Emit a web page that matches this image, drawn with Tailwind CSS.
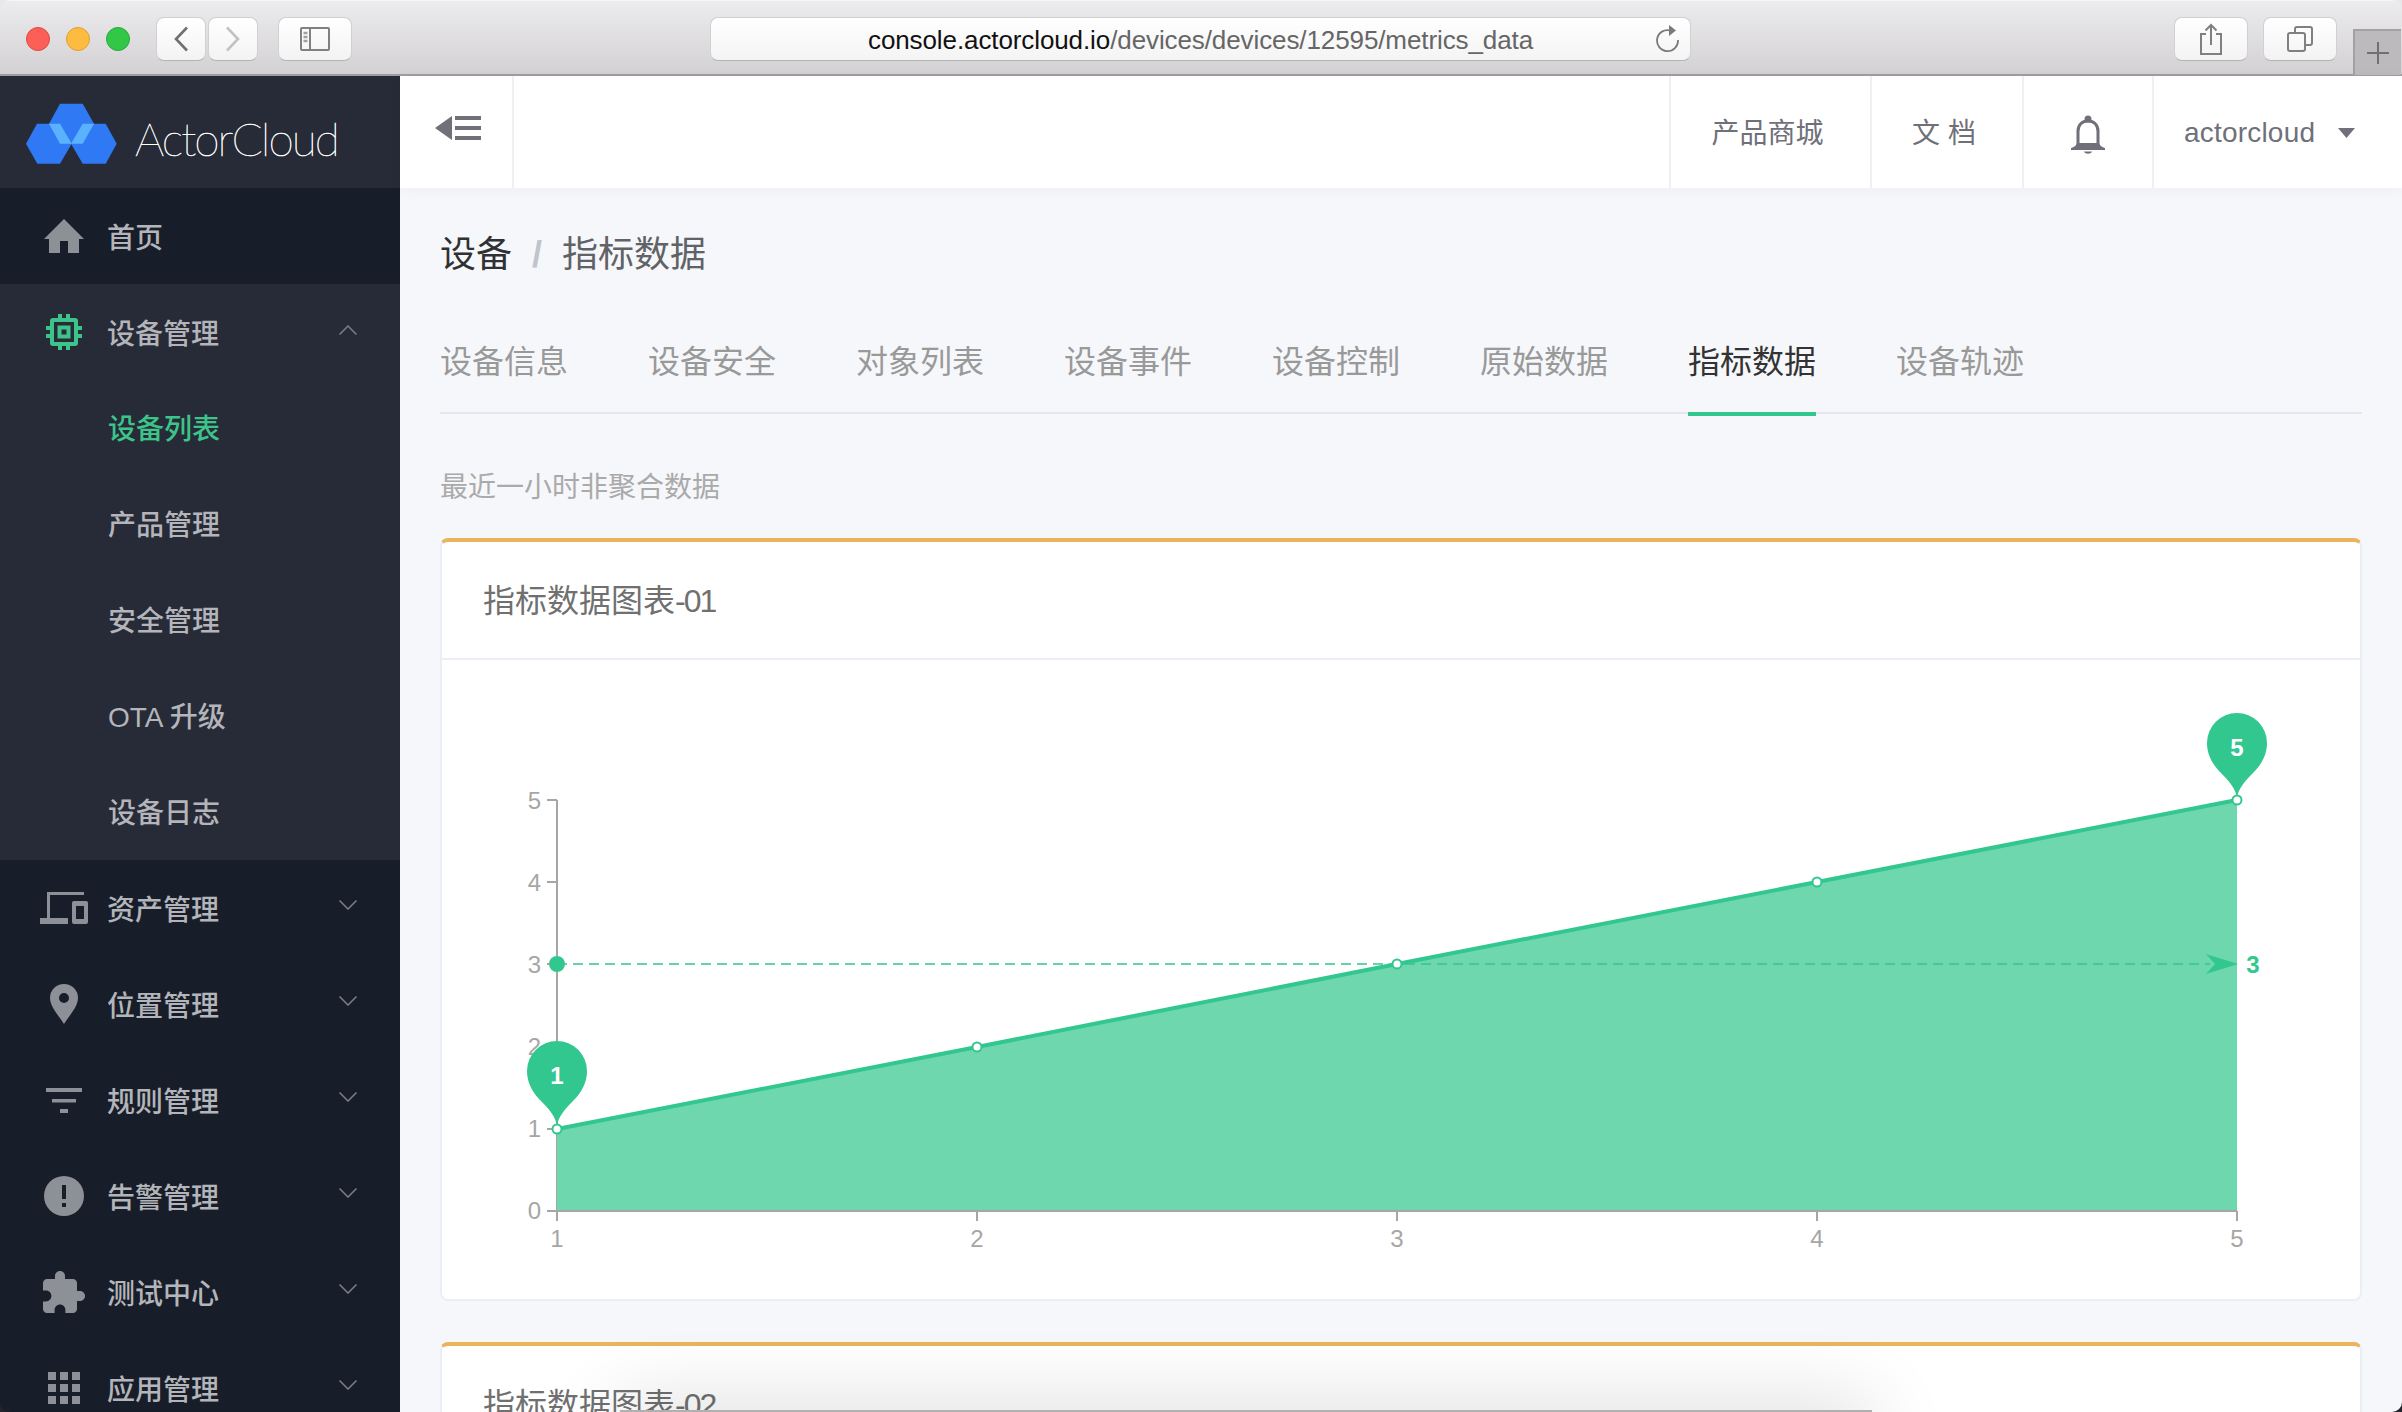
<!DOCTYPE html>
<html lang="zh-CN">
<head>
  <meta charset="UTF-8">
  <title>ActorCloud | 指标数据</title>
  <script src="https://cdn.jsdelivr.net/npm/@tailwindcss/browser@4"></script>
</head>
<body class="w-[2402px] h-[1412px] overflow-hidden bg-[linear-gradient(#e8e8ea_50%,#23232c_50%)] font-['Liberation_Sans','Noto_Sans_CJK_SC',sans-serif]">
  <div class="relative w-full h-full overflow-hidden rounded-[10px] flex flex-col">
    <!-- browser chrome -->
    <div class="h-[76px] shrink-0 flex items-start pt-4 pl-[26px] bg-gradient-to-b from-[#ecebed] to-[#d3d1d4] border-b-2 border-[#9f9da1] border-t border-t-[#f6f6f6]">
      <div class="flex gap-4 mt-2.5">
        <span class="w-6 h-6 rounded-full bg-[#fc5f58] border border-[#e2463f]"></span>
        <span class="w-6 h-6 rounded-full bg-[#fdbc40] border border-[#e0a030]"></span>
        <span class="w-6 h-6 rounded-full bg-[#33c748] border border-[#27aa35]"></span>
      </div>
      <div class="ml-[26px] flex gap-0.5">
        <div class="w-[50px] h-[44px] rounded-lg bg-gradient-to-b from-white to-[#f3f3f3] border border-[#d0d0d0] border-b-[#b4b4b4] flex items-center justify-center">
          <svg width="16" height="26" viewBox="0 0 16 26" fill="none" stroke="#707070" stroke-width="2.6"><path d="M14 1.5 3 13l11 11.5"/></svg>
        </div>
        <div class="w-[50px] h-[44px] rounded-lg bg-gradient-to-b from-white to-[#f3f3f3] border border-[#d0d0d0] border-b-[#b4b4b4] flex items-center justify-center">
          <svg width="16" height="26" viewBox="0 0 16 26" fill="none" stroke="#c2c2c2" stroke-width="2.6"><path d="M2 1.5 13 13 2 24.5"/></svg>
        </div>
      </div>
      <div class="ml-5 w-[74px] h-[44px] rounded-lg bg-gradient-to-b from-white to-[#f3f3f3] border border-[#d0d0d0] border-b-[#b4b4b4] flex items-center justify-center">
        <svg width="30" height="24" viewBox="0 0 30 24" fill="none" stroke="#808080" stroke-width="2"><rect x="1" y="1" width="28" height="22" rx="1"/><path d="M10 1v22"/><path d="M3.500 6h4M3.500 10h4M3.500 14h4" stroke="#a0a0a0" stroke-width="2.500"/></svg>
      </div>
      <div class="ml-[358px] w-[981px] h-[44px] relative rounded-lg bg-gradient-to-b from-white to-[#f4f4f4] border border-[#d0d0d0] border-b-[#b4b4b4] flex items-center justify-center pt-[3px] text-[26px] tracking-[-0.1px] text-[#666]">
        <span><span class="text-[#111]">console.actorcloud.io</span>/devices/devices/12595/metrics_data</span>
        <svg class="absolute right-[10px] top-[7px]" width="24" height="28" viewBox="0 0 24 28" fill="none"><path d="M14.500 5.500A10.500 10.500 0 1 0 22 15" stroke="#7a7a7a" stroke-width="1.800"/><path d="M13 0l7 5.500L13 11z" fill="#7a7a7a"/></svg>
      </div>
      <div class="ml-[483px] w-[74px] h-[44px] rounded-lg bg-gradient-to-b from-white to-[#f3f3f3] border border-[#d0d0d0] border-b-[#b4b4b4] flex items-center justify-center">
        <svg width="24" height="32" viewBox="0 0 24 32" fill="none" stroke="#808080" stroke-width="2"><path d="M7 11H2v20h20V11h-5"/><path d="M12 22V2M6.500 7.500 12 2l5.500 5.500"/></svg>
      </div>
      <div class="ml-[15px] w-[74px] h-[44px] rounded-lg bg-gradient-to-b from-white to-[#f3f3f3] border border-[#d0d0d0] border-b-[#b4b4b4] flex items-center justify-center">
        <svg width="26" height="26" viewBox="0 0 26 26" fill="none" stroke="#808080" stroke-width="2"><rect x="1" y="7" width="17" height="18" rx="2"/><path d="M8 7V3a2 2 0 0 1 2-2h13a2 2 0 0 1 2 2v14a2 2 0 0 1-2 2h-5"/></svg>
      </div>
      <div class="ml-4 mt-3 w-12 h-[46px] bg-[#bcbabd] border-t-2 border-l-2 border-[#a3a1a5] flex items-center justify-center">
        <svg width="22" height="22" viewBox="0 0 22 22" stroke="#707072" stroke-width="2"><path d="M11 0v22M0 11h22"/></svg>
      </div>
    </div>

    <div class="flex-1 flex min-h-0">
      <!-- sidebar -->
      <aside class="w-[400px] shrink-0 bg-[#181e29] text-[28px] font-medium text-[#b4b5ba]">
        <div class="h-[112px] bg-[#272b37] flex items-center pl-[26px]">
          <svg class="w-[92px] h-[62px] mt-[4px]" viewBox="26 105 92 62">
            <g fill="#3079f5">
              <polygon points="60,105.700 82.700,105.700 94,125.700 82.700,145.700 60,145.700 49,125.700"/>
              <polygon points="37,125.700 60,125.700 71.700,145.700 60,165.700 37.300,165.700 26,145.700"/>
              <polygon points="82.700,125.700 105.700,125.700 116.700,145.700 105.700,165.700 82.700,165.700 71,145.700"/>
            </g>
            <g fill="#5ab2fd">
              <polygon points="49,125.700 60,125.700 71.700,145.700 60,145.700"/>
              <polygon points="82.700,125.700 94,125.700 82.700,145.700 71,145.700"/>
            </g>
          </svg>
          <span class="ml-[17px] mt-[12px] font-['Lato',sans-serif] font-thin text-[46px] tracking-[-2px] text-white [-webkit-text-stroke:0.5px_white]">ActorCloud</span>
        </div>

        <div class="h-24 flex items-center">
          <span class="ml-5 w-[87px] flex justify-center">
            <svg width="40" height="34" viewBox="0 0 40 34" fill="#8e9097"><path d="M20 0 40 20h-5v14H24V22h-8v12H5V20H0z"/></svg>
          </span>
          <span class="pt-[5px]">首页</span>
        </div>

        <div class="bg-[#272b37]">
          <div class="h-24 flex items-center">
            <span class="ml-5 w-[87px] flex justify-center">
              <svg width="36" height="36" viewBox="0 0 36 36" fill="#3cc48a" fill-rule="evenodd"><path d="M12 0h4v4h-4zM20 0h4v4h-4zM12 32h4v4h-4zM20 32h4v4h-4zM0 12h4v4H0zM0 20h4v4H0zM32 12h4v4h-4zM32 20h4v4h-4z"/><path d="M7 4h22a3 3 0 0 1 3 3v22a3 3 0 0 1-3 3H7a3 3 0 0 1-3-3V7a3 3 0 0 1 3-3zM8 8v20h20V8zM11.500 11.500h13v13h-13zM15.500 15.500v5h5v-5z"/></svg>
            </span>
            <span class="pt-[5px]">设备管理</span>
            <svg class="ml-auto mr-[43px] -mt-[4px]" width="18" height="10" viewBox="0 0 18 10" fill="none" stroke="#7c7e85" stroke-width="1.500"><path d="M0.500 9.500 9 1l8.500 8.500"/></svg>
          </div>
          <div class="h-24 flex items-center pl-[108px] pt-[4px] text-[#3cc48a]">设备列表</div>
          <div class="h-24 flex items-center pl-[108px] pt-[4px]">产品管理</div>
          <div class="h-24 flex items-center pl-[108px] pt-[4px]">安全管理</div>
          <div class="h-24 flex items-center pl-[108px] pt-[4px]">OTA 升级</div>
          <div class="h-24 flex items-center pl-[108px] pt-[4px]">设备日志</div>
        </div>

        <div class="h-24 flex items-center">
          <span class="ml-5 w-[87px] flex justify-center">
            <svg width="48" height="32" viewBox="0 0 48 32" fill="#8e9097"><path fill-rule="evenodd" d="M7 0h37v3H10v23h18v6H0v-6h7z"/><path fill-rule="evenodd" d="M34 9h12a2 2 0 0 1 2 2v19a2 2 0 0 1-2 2H34a2 2 0 0 1-2-2V11a2 2 0 0 1 2-2zm2 5v13h8V14z"/></svg>
          </span>
          <span class="pt-[5px]">资产管理</span>
          <svg class="ml-auto mr-[43px] -mt-[6px]" width="18" height="10" viewBox="0 0 18 10" fill="none" stroke="#7c7e85" stroke-width="1.500"><path d="M0.500 0.500 9 9l8.500-8.500"/></svg>
        </div>
        <div class="h-24 flex items-center">
          <span class="ml-5 w-[87px] flex justify-center">
            <svg width="28" height="40" viewBox="0 0 28 40" fill="#8e9097"><path fill-rule="evenodd" d="M14 0a14 14 0 0 1 14 14c0 9-10 19-14 26C10 33 0 23 0 14A14 14 0 0 1 14 0zm0 9a5 5 0 1 0 0 10 5 5 0 0 0 0-10z"/></svg>
          </span>
          <span class="pt-[5px]">位置管理</span>
          <svg class="ml-auto mr-[43px] -mt-[6px]" width="18" height="10" viewBox="0 0 18 10" fill="none" stroke="#7c7e85" stroke-width="1.500"><path d="M0.500 0.500 9 9l8.500-8.500"/></svg>
        </div>
        <div class="h-24 flex items-center">
          <span class="ml-5 w-[87px] flex justify-center">
            <svg width="36" height="25" viewBox="0 0 36 25" fill="#8e9097"><path d="M0 0h36v4H0zM6 11h24v3.500H6zM14 21h8v4h-8z"/></svg>
          </span>
          <span class="pt-[5px]">规则管理</span>
          <svg class="ml-auto mr-[43px] -mt-[6px]" width="18" height="10" viewBox="0 0 18 10" fill="none" stroke="#7c7e85" stroke-width="1.500"><path d="M0.500 0.500 9 9l8.500-8.500"/></svg>
        </div>
        <div class="h-24 flex items-center">
          <span class="ml-5 w-[87px] flex justify-center">
            <svg width="40" height="40" viewBox="0 0 40 40" fill="#8e9097"><path fill-rule="evenodd" d="M20 0a20 20 0 1 1 0 40 20 20 0 0 1 0-40zm-2 9v14h4V9zm0 18v4h4v-4z"/></svg>
          </span>
          <span class="pt-[5px]">告警管理</span>
          <svg class="ml-auto mr-[43px] -mt-[6px]" width="18" height="10" viewBox="0 0 18 10" fill="none" stroke="#7c7e85" stroke-width="1.500"><path d="M0.500 0.500 9 9l8.500-8.500"/></svg>
        </div>
        <div class="h-24 flex items-center">
          <span class="ml-5 w-[87px] flex justify-center">
            <svg width="42" height="42" viewBox="2 1 21 21" fill="#8e9097"><path d="M20.500 11H19V7c0-1.100-.9-2-2-2h-4V3.500C13 2.120 11.880 1 10.500 1S8 2.120 8 3.500V5H4c-1.100 0-1.990.9-1.990 2v3.800H3.500c1.490 0 2.700 1.210 2.700 2.700s-1.210 2.700-2.700 2.700H2V20c0 1.100.9 2 2 2h3.800v-1.500c0-1.490 1.210-2.700 2.700-2.700 1.490 0 2.700 1.210 2.700 2.700V22H17c1.100 0 2-.9 2-2v-4h1.500c1.380 0 2.500-1.120 2.500-2.500S21.880 11 20.500 11z"/></svg>
          </span>
          <span class="pt-[5px]">测试中心</span>
          <svg class="ml-auto mr-[43px] -mt-[6px]" width="18" height="10" viewBox="0 0 18 10" fill="none" stroke="#7c7e85" stroke-width="1.500"><path d="M0.500 0.500 9 9l8.500-8.500"/></svg>
        </div>
        <div class="h-24 flex items-center">
          <span class="ml-5 w-[87px] flex justify-center">
            <svg width="32" height="32" viewBox="0 0 32 32" fill="#8e9097"><path d="M0 0h8v8H0zM12 0h8v8h-8zM24 0h8v8h-8zM0 12h8v8H0zM12 12h8v8h-8zM24 12h8v8h-8zM0 24h8v8H0zM12 24h8v8h-8zM24 24h8v8h-8z"/></svg>
          </span>
          <span class="pt-[5px]">应用管理</span>
          <svg class="ml-auto mr-[43px] -mt-[6px]" width="18" height="10" viewBox="0 0 18 10" fill="none" stroke="#7c7e85" stroke-width="1.500"><path d="M0.500 0.500 9 9l8.500-8.500"/></svg>
        </div>
      </aside>

      <div class="flex-1 min-w-0 flex flex-col bg-[#f6f7fa]">
        <!-- top bar -->
        <header class="relative z-10 h-[112px] shrink-0 bg-white shadow-[0_2px_14px_rgba(0,0,0,0.04)] flex text-[28px] text-[#6f7079]">
          <div class="w-[114px] border-r-2 border-[#f0f0f2] flex items-center pl-[35px] pb-2">
            <svg width="46" height="24" viewBox="0 0 46 24" fill="#6f7079"><path d="M17 0v24L0 12zM20 0h26v4H20zM20 10h26v4H20zM20 20h26v4H20z"/></svg>
          </div>
          <div class="ml-auto w-[201px] border-l-2 border-[#f0f0f2] flex items-center justify-center pr-[6px] pt-[3px]">产品商城</div>
          <div class="w-[152px] border-l-2 border-[#f0f0f2] flex items-center justify-center pr-[6px] pt-[3px]">文 档</div>
          <div class="w-[130px] border-l-2 border-[#f0f0f2] flex items-center justify-center pt-[6px]">
            <svg width="34" height="40" viewBox="0 0 34 40" fill="none"><circle cx="17" cy="4" r="3.500" fill="#6f7079"/><path d="M7 30V16C7 10 11 6 17 6s10 4 10 10v14" stroke="#6f7079" stroke-width="3"/><path d="M0 33c3-1 5-2 6-5h22c1 3 3 4 6 5v2H0z" fill="#6f7079"/><path d="M13 36.500h8c-1 3-7 3-8 0z" fill="#6f7079"/></svg>
          </div>
          <div class="w-[250px] border-l-2 border-[#f0f0f2] flex items-center pl-[30px] pt-[1px]">
            <span class="tracking-[0.2px]">actorcloud</span>
            <svg class="ml-[23px]" width="17" height="10" viewBox="0 0 17 10" fill="#6f7079"><path d="M0 0h17L8.500 10z"/></svg>
          </div>
        </header>

        <main class="flex-1 min-h-0 overflow-hidden pl-[40px] pr-[40px]">
          <nav class="h-[131px] flex items-center pt-[3px] text-[36px] text-[#606266]">
            <span class="text-[#303133]">设备</span>
            <span class="mx-[20px] text-[#c0c4cc] font-bold">/</span>
            <span>指标数据</span>
          </nav>
          <div class="h-[95px] relative flex gap-20 border-b-2 border-[#e4e7ed] text-[32px] text-[#999]">
            <span class="h-[95px] flex items-center pb-[10px]">设备信息</span>
            <span class="h-[95px] flex items-center pb-[10px]">设备安全</span>
            <span class="h-[95px] flex items-center pb-[10px]">对象列表</span>
            <span class="h-[95px] flex items-center pb-[10px]">设备事件</span>
            <span class="h-[95px] flex items-center pb-[10px]">设备控制</span>
            <span class="h-[95px] flex items-center pb-[10px]">原始数据</span>
            <span class="h-[97px] flex items-center pb-[8px] text-[#333] border-b-4 border-[#32c78f]">指标数据</span>
            <span class="h-[95px] flex items-center pb-[10px]">设备轨迹</span>
          </div>
          <p class="mt-[54px] h-10 flex items-center text-[28px] text-[#aaa]">最近一小时非聚合数据</p>

          <section class="mt-[30px] h-[763px] bg-white rounded-lg border-2 border-[#ebeef5] border-t-4 border-t-[#e9b45b]">
            <h3 class="h-[116px] box-content border-b-2 border-[#ebeef5] pl-[41px] pt-0 flex items-center text-[32px] font-normal text-[#707070]"><span class="pt-[2px]">指标数据图表<span class="tracking-[-2px]">-01</span></span></h3>
            <svg class="block w-[1918px] h-[639px]" viewBox="442 660 1918 639" font-size="24" fill="#a6a6a6">
              <path d="M557 800V1211H2237" fill="none" stroke="#a6a6a6" stroke-width="2"/>
              <path d="M547 800h10M547 882h10M547 964h10M547 1047h10M547 1129h10M547 1211h10M557 1211v10M977 1211v10M1397 1211v10M1817 1211v10M2237 1211v10" stroke="#a6a6a6" stroke-width="2"/>
              <g text-anchor="end">
                <text x="541" y="809">5</text><text x="541" y="891">4</text><text x="541" y="973">3</text><text x="541" y="1055">2</text><text x="541" y="1137">1</text><text x="541" y="1219">0</text>
              </g>
              <g text-anchor="middle">
                <text x="557" y="1247">1</text><text x="977" y="1247">2</text><text x="1397" y="1247">3</text><text x="1817" y="1247">4</text><text x="2237" y="1247">5</text>
              </g>
              <polygon points="557,1129 977,1047 1397,964 1817,882 2237,800 2237,1210 557,1210" fill="#6fd7ae"/>
              <polyline points="557,1129 977,1047 1397,964 1817,882 2237,800" fill="none" stroke="#32c78f" stroke-width="4"/>
              <path d="M557 964H2210" stroke="#32c78f" stroke-width="1.600" stroke-dasharray="10 6"/>
              <circle cx="557" cy="964" r="8" fill="#32c78f"/>
              <polygon points="2238,964 2206,954 2215,964 2206,974" fill="#32c78f"/>
              <text x="2253" y="973" text-anchor="middle" font-size="24" font-weight="600" fill="#32c78f">3</text>
              <g fill="#fff" stroke="#32c78f" stroke-width="2">
                <circle cx="977" cy="1047" r="4.500"/><circle cx="1397" cy="964" r="4.500"/><circle cx="1817" cy="882" r="4.500"/>
              </g>
              <path transform="translate(557 1071)" d="M0 55C-1 46-8 38-16 30-24 22-30 12-30 0A30 30 0 1 1 30 0C30 12 24 22 16 30 8 38 1 46 0 55z" fill="#32c78f"/>
              <path transform="translate(2237 743)" d="M0 55C-1 46-8 38-16 30-24 22-30 12-30 0A30 30 0 1 1 30 0C30 12 24 22 16 30 8 38 1 46 0 55z" fill="#32c78f"/>
              <g fill="#fff" stroke="#32c78f" stroke-width="2">
                <circle cx="557" cy="1129" r="4.500"/><circle cx="2237" cy="800" r="4.500"/>
              </g>
              <text x="557" y="1084" text-anchor="middle" font-size="24" font-weight="600" fill="#fff">1</text>
              <text x="2237" y="756" text-anchor="middle" font-size="24" font-weight="600" fill="#fff">5</text>
            </svg>
          </section>

          <section class="mt-[41px] h-[300px] bg-white rounded-lg border-2 border-[#ebeef5] border-t-4 border-t-[#e9b45b]">
            <h3 class="h-[116px] box-content border-b-2 border-[#ebeef5] pl-[41px] flex items-center text-[32px] font-normal text-[#707070]"><span class="pt-[2px]">指标数据图表<span class="tracking-[-2px]">-02</span></span></h3>
          </section>
        </main>
      </div>
    </div>

    <!-- shadow of the window below, comes in at the bottom edge -->
    <div class="absolute left-[620px] top-[1410px] w-[1252px] h-[40px] bg-[#b0b0b0] shadow-[0_0_80px_rgba(0,0,0,0.2)]"></div>
  </div>
</body>
</html>
